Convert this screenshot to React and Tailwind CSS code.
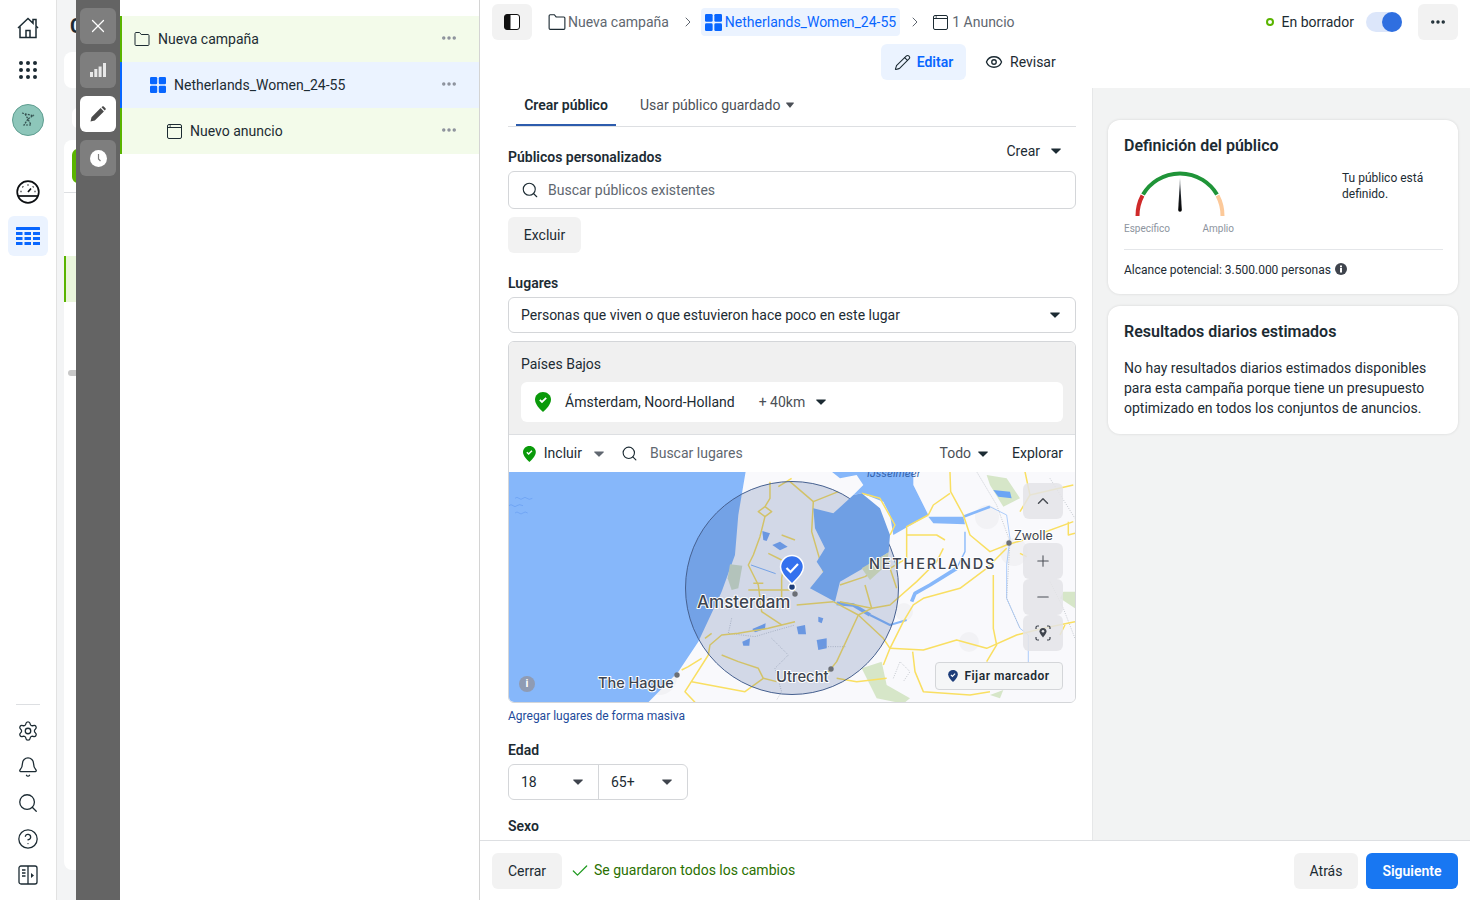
import React from 'react';
import { X, Pencil, Eye, Search, Settings, Bell, CircleHelp, ChevronRight, ChevronUp, Plus, Minus, Check, Ellipsis } from 'lucide-react';

const Caret = ({ className = 'text-[#1c2b33]' }) => (
    <svg width="10" height="6" viewBox="0 0 10 6" className={className}>
        <path d="M0.6 0.5h8.8c.4 0 .6.4.4.7L5.4 5.5a.6.6 0 0 1-.8 0L.2 1.2C0 .9.2.5.6.5z" fill="currentColor" />
    </svg>
);

const FolderIcon = ({ size = 16 }) => (
    <svg width={size} height={size} viewBox="0 0 16 16" fill="none" stroke="currentColor" strokeWidth="1">
        <path d="M1 2.500C1 1.900 1.400 1.500 2 1.500h3.600l1.600 2H14c.6 0 1 .4 1 1v9c0 .6-.4 1-1 1H2c-.6 0-1-.4-1-1z" />
    </svg>
);

const AdSetIcon = ({ size = 16 }) => (
    <svg width={size} height={size} viewBox="0 0 16 16" fill="#0866ff">
        <rect x="0" y="0" width="7.2" height="7.2" rx="1.2" />
        <rect x="8.8" y="0" width="7.2" height="7.2" rx="1.2" />
        <rect x="0" y="8.8" width="7.2" height="7.2" rx="1.2" />
        <rect x="8.8" y="8.8" width="7.2" height="7.2" rx="1.2" />
    </svg>
);

const AdIcon = ({ size = 15 }) => (
    <svg width={size} height={size} viewBox="0 0 15 15" fill="none" stroke="currentColor" strokeWidth="1">
        <rect x="0.5" y="0.5" width="14" height="14" rx="1.5" />
        <path d="M0.5 3.5h14" />
        <path d="M2.5 2h1.5" />
    </svg>
);

const GreenPin = ({ size = 20 }) => (
    <svg width={size * 0.8} height={size} viewBox="0 0 16 20">
        <path d="M8 0C3.6 0 0 3.3 0 7.6 0 12.4 4.700 17.300 8 20c3.300-2.700 8-7.600 8-12.400C16 3.300 12.400 0 8 0z" fill="#0a9a0a" />
        <path d="M4.800 7.800l2.200 2.200 4.200-4.200" fill="none" stroke="#fff" strokeWidth="1.800" />
    </svg>
);

const HomeIcon = () => (
    <svg width="22" height="22" viewBox="0 0 22 22" fill="none" stroke="#1c2b33" strokeWidth="1.500">
        <path d="M1 11L11 1.500l5 4.700V2.500h3v6.500l2 2" />
        <path d="M3 9.500V20.500h16V9.500" />
        <path d="M9 20.500v-7h4v7" />
    </svg>
);

const DotsGrid = () => (
    <svg width="18" height="18" viewBox="0 0 18 18" fill="#1c2b33">
        {[2, 9, 16].map(y => [2, 9, 16].map(x => <circle key={`${x}-${y}`} cx={x} cy={y} r="2" />))}
    </svg>
);

const Avatar = () => (
    <svg width="32" height="32" viewBox="0 0 32 32">
        <circle cx="16" cy="16" r="15.500" fill="#8dc6ba" stroke="#5f9d90" strokeWidth="1" />
        <path d="M10 9l12 3M13 10l3 5-4 6h7l-3-6 6-4" fill="none" stroke="#33504f" strokeWidth="1.200" strokeDasharray="2 1" />
    </svg>
);

const GaugeIcon = () => (
    <svg width="24" height="24" viewBox="0 0 24 24" fill="none" stroke="#0c0f12" strokeWidth="1.700">
        <circle cx="12" cy="12" r="10.800" />
        <path d="M2 16h20" />
        <path d="M12 12l3-3.500" />
        <path d="M12 4.500v1M6.500 6.500l.7.700M4.500 11.500h1M18.500 11.500h1M17.500 6.500l-.7.700" strokeWidth="1.500" />
    </svg>
);

const TableIcon = () => (
    <svg width="24" height="20" viewBox="0 0 24 20" fill="#0866ff">
        <rect x="0" y="1" width="24" height="3" rx="0.500" />
        {[6, 11, 16].map(y => (
            <g key={y}>
                <rect x="0" y={y} width="6.500" height="3" />
                <rect x="8.500" y={y} width="6.500" height="3" />
                <rect x="17" y={y} width="7" height="3" />
            </g>
        ))}
    </svg>
);

const PanelIcon = () => (
    <svg width="20" height="20" viewBox="0 0 20 20" fill="none" stroke="#1c2b33" strokeWidth="1.300">
        <rect x="1" y="1" width="18" height="18" rx="2" />
        <path d="M10 1v18" />
        <path d="M4 5h3.500M4 8h3.500M4 11h3.500" />
        <path d="M13 8l3 2.500-3 2.500z" fill="#1c2b33" stroke="none" />
    </svg>
);

const NavRail = () => (
    <aside className="w-[57px] shrink-0 h-full bg-white border-r border-[#e2e2e2] flex flex-col items-center">
        <div className="h-[56px] flex items-center justify-center"><HomeIcon /></div>
        <div className="h-[28px] flex items-center justify-center"><DotsGrid /></div>
        <div className="mt-[20px] h-[32px]"><Avatar /></div>
        <div className="mt-[44px] h-[24px]"><GaugeIcon /></div>
        <div className="mt-[12px] w-[40px] h-[40px] rounded-md bg-[#ebf3ff] flex items-center justify-center"><TableIcon /></div>
        <div className="mt-auto w-[24px] border-t border-[#dddfe2] mb-[8px]" />
        <div className="flex flex-col items-center text-[#1c2b33] mb-[7px]">
            {[Settings, Bell, Search, CircleHelp].map((Icon, i) => (
                <div key={i} className="h-[36px] flex items-center justify-center"><Icon size={22} strokeWidth={1.400} /></div>
            ))}
            <div className="h-[36px] flex items-center justify-center"><PanelIcon /></div>
        </div>
    </aside>
);

// the page behind the drawer, only a sliver shows
const PeekStrip = () => (
    <div className="w-[19px] shrink-0 h-full bg-[#f3f4f5] pl-[7px] overflow-hidden flex flex-col">
        <div className="h-[52px] pt-[12px] pl-[6px] text-[20px] leading-[28px] font-bold text-[#1c2b33]">C</div>
        <div className="h-[36px] w-[40px] bg-white rounded-l-lg" />
        <div className="mt-[20px] h-[20px] ml-[8px] w-[20px] bg-white rounded-l-md" />
        <div className="mt-[12px] flex-1 bg-white rounded-l-lg mb-[30px] w-[40px] flex flex-col">
            <div className="mt-[9px] ml-[8px] h-[34px] w-[6px] bg-[#5ab400] rounded-l-md" />
            <div className="mt-[9px] border-t border-[#dddfe2]" />
            <div className="mt-[63px] h-[46px] bg-[#eaf6dc] border-l-2 border-[#5ab400]" />
            <div className="mt-[68px] h-[6px] ml-[4px] bg-[#c8c8c8] rounded-l-full" />
        </div>
    </div>
);

const ToolButton = ({ active, children }) => (
    <div className={`w-[36px] h-[36px] rounded-md flex items-center justify-center ${active ? 'bg-white text-[#4b4b4b]' : 'bg-[#7e7e7e] text-white'}`}>
        {children}
    </div>
);

const ToolStrip = () => (
    <div className="w-[44px] shrink-0 h-full bg-[#646464] pt-[8px] flex flex-col items-center gap-[8px]">
        <ToolButton><X size={22} strokeWidth={1.300} /></ToolButton>
        <ToolButton>
            <svg width="16" height="14" viewBox="0 0 16 14" fill="#e8e8e8">
                <rect x="0" y="9" width="3" height="5" />
                <rect x="4.300" y="6" width="3" height="8" />
                <rect x="8.600" y="3.500" width="3" height="10.500" />
                <rect x="13" y="0" width="3" height="14" />
            </svg>
        </ToolButton>
        <ToolButton active>
            <svg width="16" height="16" viewBox="0 0 16 16" fill="currentColor">
                <path d="M0.500 15.500l1-4.300L10.600 2.100l3.300 3.300L4.800 14.500zM11.500 1.200l.8-.7c.4-.4 1-.4 1.400 0l1.800 1.800c.4.4.4 1 0 1.400l-.8.800z" />
            </svg>
        </ToolButton>
        <ToolButton>
            <svg width="17" height="17" viewBox="0 0 17 17">
                <circle cx="8.500" cy="8.500" r="8.500" fill="#fff" />
                <path d="M8.500 4v5l2 2" fill="none" stroke="#7e7e7e" strokeWidth="1.200" />
            </svg>
        </ToolButton>
    </div>
);

const TREE_ROWS = [
    { label: 'Nueva campaña', icon: <FolderIcon />, indent: 'pl-[12px]', tone: 'bg-[#f3fbea] border-[#5ab400]' },
    { label: 'Netherlands_Women_24-55', icon: <AdSetIcon />, indent: 'pl-[28px]', tone: 'bg-[#ebf3ff] border-[#0866ff]' },
    { label: 'Nuevo anuncio', icon: <AdIcon />, indent: 'pl-[45px]', tone: 'bg-[#f3fbea] border-[#5ab400]' },
];

const TreePanel = () => (
    <div className="w-[360px] shrink-0 h-full bg-white border-r border-[#d4d4d4] pt-[16px]">
        {TREE_ROWS.map(row => (
            <div key={row.label} className={`h-[46px] border-l-2 pr-[21px] flex items-center gap-[8px] text-[14px] text-[#1c2b33] ${row.tone} ${row.indent}`}>
                {row.icon}
                <span className="flex-1">{row.label}</span>
                <Ellipsis size={18} strokeWidth={2.600} className="text-[#8a8f9a] -mt-[2px]" />
            </div>
        ))}
    </div>
);

const TopBar = () => (
    <header className="h-[88px] shrink-0 bg-white px-[12px] pt-[4px]">
        <div className="h-[36px] flex items-center text-[14px] text-[#606770]">
            <div className="w-[40px] h-[36px] rounded-md bg-[#f2f2f2] flex items-center justify-center">
                <svg width="16" height="16" viewBox="0 0 16 16">
                    <rect x="0.500" y="0.500" width="15" height="15" rx="2.500" fill="#fff" stroke="#111" />
                    <path d="M3 0.500h3.500v15H3a2.500 2.500 0 0 1-2.500-2.500V3A2.500 2.500 0 0 1 3 .5z" fill="#111" />
                </svg>
            </div>
            <span className="ml-[16px] text-[#1c2b33]"><FolderIcon size={18} /></span>
            <span className="ml-[2px]">Nueva campaña</span>
            <ChevronRight size={16} strokeWidth={1.500} className="ml-[11px]" />
            <div className="ml-[5px] h-[28px] px-[4px] rounded bg-[#ebf3ff] flex items-center gap-[3px] text-[#0866ff]">
                <AdSetIcon size={17} />
                <span>Netherlands_Women_24-55</span>
            </div>
            <ChevronRight size={16} strokeWidth={1.500} className="ml-[7px]" />
            <span className="ml-[10px] text-[#1c2b33]"><AdIcon /></span>
            <span className="ml-[4px]">1 Anuncio</span>
            <span className="ml-auto w-[8px] h-[8px] rounded-full border-2 border-[#5ab400] mr-[8px]" />
            <span className="text-[#1c2b33] mr-[12px]">En borrador</span>
            <div className="w-[36px] h-[20px] rounded-full bg-[#dce6fa] flex justify-end mr-[16px]">
                <div className="w-[20px] h-[20px] rounded-full bg-[#2f6fe0]" />
            </div>
            <div className="w-[40px] h-[36px] rounded-md bg-[#f2f2f2] flex items-center justify-center text-[#1c2b33]">
                <Ellipsis size={18} strokeWidth={2.600} />
            </div>
        </div>
        <div className="mt-[4px] h-[36px] flex items-center pl-[389px] text-[14px]">
            <div className="h-[36px] w-[85px] rounded-md bg-[#ebf3ff] flex items-center justify-center gap-[6px] text-[#0866ff] font-semibold">
                <Pencil size={17} strokeWidth={1.500} className="text-[#1c2b33]" />
                <span>Editar</span>
            </div>
            <Eye size={18} strokeWidth={1.800} className="ml-[19px] text-[#1c2b33]" />
            <span className="ml-[7px] text-[#1c2b33]">Revisar</span>
        </div>
    </header>
);

const SectionLabel = ({ children, className = '' }) => (
    <div className={`text-[14px] leading-[20px] font-semibold text-[#1c2b33] ${className}`}>{children}</div>
);

const ROADS_LEFT = [
    'M795,50 L795,100 L780,125 L760,140 L780,155 L765,215 L745,270 L730,300 L760,360 L770,440 L830,480',
    'M780,125 L800,140 L780,155',
    'M790,265 L830,285',
    'M730,375 L870,375',
    'M745,355 L775,355',
    'M830,210 L870,225',
    'M840,280 L830,340 L830,400',
    'M870,470 L790,490 L700,505 L650,510 L615,540 L610,570 L540,680 L570,712',
    'M650,570 L700,590 L760,610 L775,640 L720,680 L560,650',
    'M775,640 L815,650',
    'M600,520 L620,505',
    'M530,615 L550,605 L590,580',
    'M820,65 L860,40',
];

const ROADS_RIGHT = [
    'M480,20 L482,80 L520,150 L540,210 L600,260 L650,240 L700,225 L850,170',
    'M415,150 L350,185 L350,280 L300,310 L320,370',
    'M480,85 L430,120 L415,150',
    'M350,210 L440,210 L465,225',
    'M650,250 L590,310 L510,370 L400,400 L370,420 L340,470 L300,550 L280,600',
    'M300,550 L400,555 L500,525 L590,550 L680,510 L760,490 L855,470',
    'M610,330 L610,490 L620,540 L590,590',
    'M460,250 L440,290 L380,350 L300,420 L245,430 L150,410',
    'M368,560 L375,620 L400,680 L540,690 L600,680',
    'M705,20 L720,90 L690,140',
    'M720,90 L850,60',
    'M835,170 L835,210 L855,205',
    'M0,50 L70,110 L145,80',
    'M70,110 L65,200 L100,320',
    'M130,410 L205,450 L140,590 L100,640',
    'M205,450 L280,520 L300,550',
    'M225,360 L245,430 L205,450',
    'M150,360 L225,335 L300,290',
    'M20,420 L130,410',
    'M215,85 L270,100 L315,180 L300,210',
    'M810,510 L825,480',
    'M690,265 L710,275',
    'M140,640 L200,650 L290,640',
];

const MapDrawing = () => (
    <svg viewBox="0 0 567 230" width="567" height="230" className="block">
        <rect width="567" height="230" fill="#f9f9fc" />
        {/* soft urban patches */}
        <g fill="#f2f2f5">
            <circle cx="478" cy="45" r="12" /><circle cx="460" cy="170" r="10" /><circle cx="350" cy="50" r="18" />
            <circle cx="395" cy="140" r="9" /><circle cx="505" cy="80" r="14" /><circle cx="150" cy="205" r="18" />
        </g>
        <g transform="translate(281,-7) scale(0.3333)">
            <g fill="#d6e6c8">
                <path d="M590,30 L650,40 L690,100 L640,125 L600,60z" />
                <path d="M820,380 L855,380 L855,430 L810,400z" />
                <path d="M215,610 L275,590 L290,660 L360,700 L340,716 L260,700z" />
                <path d="M600,690 L640,675 L630,700z" />
            </g>
            <path d="M125,20 L370,20 L370,60 L415,150 L310,210 L300,150 L280,110 L215,85 L190,90 L220,60 L200,30 L150,40z" fill="#86b7fa" />
            <path d="M415,155 L520,155 L525,178 L430,175z" fill="#86b7fa" />
            <path d="M610,75 L660,80 L665,100 L625,95z" fill="#6ba5f5" />
            <g fill="none" stroke="#86b7fa" strokeLinejoin="round">
                <path d="M520,155 L600,125" strokeWidth="8" />
                <path d="M525,200 L525,260 L500,310" strokeWidth="4" />
                <path d="M500,310 L420,360 L375,385 L365,410" strokeWidth="11" />
                <path d="M140,415 L190,420 L240,450" strokeWidth="11" />
                <path d="M240,450 L300,480 L350,465" strokeWidth="6" />
                <path d="M600,125 L650,150 L660,220 L650,300 L650,400 L690,490 L715,510 L715,600" strokeWidth="2" />
            </g>
            <g fill="#7aaaf5">
                <path d="M85,455 L100,460 L95,475 L85,470z" />
                <path d="M20,485 L45,480 L48,508 L25,508z" />
                <path d="M80,525 L110,520 L110,550 L85,555z" />
            </g>
            <g fill="none" stroke="#aab0b8" strokeWidth="2" strokeDasharray="3 4">
                <path d="M560,20 L620,120 L660,230 L650,400 L690,490" />
                <path d="M310,640 L330,590 L360,620 L340,650" />
                <path d="M780,350 L820,430 L855,520" />
                <path d="M100,545 L170,545" />
                <path d="M780,40 L855,160" />
            </g>
            <g fill="none" stroke="#f9df62" strokeWidth="4.500" strokeLinejoin="round">
                {ROADS_RIGHT.map((d, i) => <path key={i} d={d} />)}
            </g>
        </g>
        <g transform="translate(-4,-7) scale(0.3333)">
            <path d="M10,20 L722,20 L700,150 L690,270 L650,380 L580,530 L520,620 L430,712 L10,712z" fill="#86b7fa" />
            <path d="M675,298 L712,302 L700,370 L680,375 L668,340z" fill="#d3e0c6" />
            <g fill="#7aaaf5">
                <path d="M772,198 L795,205 L785,228 L775,225z" />
                <path d="M802,240 L825,230 L848,245 L825,256z" />
                <path d="M742,492 L782,475 L780,492 L750,502z" />
                <path d="M712,530 L735,520 L733,542 L715,542z" />
            </g>
            <path d="M738,300 L812,326" fill="none" stroke="#86b7fa" strokeWidth="3" />
            <g fill="none" stroke="#aab0b8" strokeWidth="2" strokeDasharray="3 4">
                <path d="M680,460 L670,505 L750,515 L800,500 L870,480" />
                <path d="M800,520 L850,570 L810,610 L830,680 L815,705" />
            </g>
            <g fill="none" stroke="#f9df62" strokeWidth="4.500" strokeLinejoin="round">
                {ROADS_LEFT.map((d, i) => <path key={i} d={d} />)}
            </g>
            <g fill="none" stroke="#5b93ee" strokeWidth="1.500">
                <path d="M30,100 q6,-6 12,0 t12,0 t12,0 t16,0" />
                <path d="M12,122 q6,-6 12,0 t12,0 t18,0" />
                <path d="M30,144 q6,-6 12,0 t12,0 t14,0" />
            </g>
        </g>
        {/* radius around the pin */}
        <circle cx="283" cy="116" r="106.500" fill="#22408a" fillOpacity="0.18" stroke="#46608f" strokeWidth="1" />
        <g transform="translate(281,-7) scale(0.3333)">
            <path d="M70,130 L130,145 L190,90 L215,85 L270,130 L300,210 L296,262 L220,310 L150,350 L135,410 L60,370 L100,320 L80,290 L105,250 L75,190z" fill="#6f9fe4" />
            <path d="M215,310 L296,262 L290,300 L240,345z" fill="#c0ccb4" />
        </g>
        <g fill="#6b6f76">
            <circle cx="168" cy="203" r="2.700" /><circle cx="322" cy="197" r="2.700" /><circle cx="500" cy="71" r="2.700" /><circle cx="286" cy="122" r="2.700" />
        </g>
        <g className="font-[family-name:Inter,sans-serif]" fill="#3d4450" stroke="#ffffff" strokeWidth="2" paintOrder="stroke" strokeLinejoin="round">
            <text x="188" y="136" fontSize="17" fontWeight="500">Amsterdam</text>
            <text x="89" y="216" fontSize="14.500" fontWeight="500">The Hague</text>
            <text x="267" y="210" fontSize="14.800" fontWeight="500">Utrecht</text>
            <text x="505" y="68" fontSize="12.500">Zwolle</text>
            <text x="360" y="97" fontSize="14.500" fontWeight="500" letterSpacing="1.800">NETHERLANDS</text>
        </g>
        <text x="358" y="5" fontSize="10.500" fontStyle="italic" fill="#2f5da8" className="font-[family-name:Inter,sans-serif]">IJsselmeer</text>
        {/* selected location pin */}
        <circle cx="283" cy="115" r="3.500" fill="#1d3d7a" stroke="#fff" strokeWidth="1.500" />
        <path d="M283,112 C275,104 271.500,100 271.500,95 A11.500,11.500 0 0 1 294.500,95 C294.500,100 291,104 283,112z" fill="#3471ee" stroke="#fff" strokeWidth="1.500" />
        <path d="M277.500,96 L281.500,100 L289,92" fill="none" stroke="#fff" strokeWidth="2.200" />
    </svg>
);

const MapButton = ({ children, className = '' }) => (
    <div className={`w-[40px] h-[36px] rounded-md bg-[#e4e4e8]/85 flex items-center justify-center text-[#4b4f56] ${className}`}>{children}</div>
);

const LocationBox = () => (
    <div className="mt-[8px] border border-[#d4d6d9] rounded-md overflow-hidden">
        <div className="h-[93px] bg-[#f0f0f0] px-[12px] pt-[12px] border-b border-[#dddfe2]">
            <div className="text-[14px] leading-[20px] text-[#1c2b33]">Países Bajos</div>
            <div className="mt-[8px] h-[40px] bg-white rounded-md flex items-center pl-[14px] text-[14px] text-[#1c2b33]">
                <GreenPin />
                <span className="ml-[14px]">Ámsterdam, Noord-Holland</span>
                <span className="ml-[24px] text-[#4b4f56]">+ 40km</span>
                <span className="ml-[11px]"><Caret /></span>
            </div>
        </div>
        <div className="h-[37px] bg-white flex items-center pl-[14px] pr-[12px] text-[14px] text-[#1c2b33]">
            <GreenPin size={16} />
            <span className="ml-[8px]">Incluir</span>
            <span className="ml-[12px]"><Caret className="text-[#606770]" /></span>
            <Search size={17} strokeWidth={1.600} className="ml-[17px]" />
            <span className="ml-[12px] text-[#606770]">Buscar lugares</span>
            <span className="ml-auto text-[#4b4f56]">Todo</span>
            <span className="ml-[7px]"><Caret /></span>
            <span className="ml-[24px]">Explorar</span>
        </div>
        <div className="relative h-[230px] overflow-hidden">
            <MapDrawing />
            <div className="absolute left-[10px] bottom-[10px] w-[16px] h-[16px] rounded-full bg-[#8f9bb3] text-white text-[11px] leading-[16px] text-center font-bold">i</div>
            <div className="absolute right-[12px] top-[11px] flex flex-col">
                <MapButton className="mb-[24px]"><ChevronUp size={18} strokeWidth={2} /></MapButton>
                <MapButton><Plus size={18} strokeWidth={1.400} /></MapButton>
                <MapButton><Minus size={18} strokeWidth={1.400} /></MapButton>
                <MapButton>
                    <svg width="16" height="16" viewBox="0 0 16 16" fill="none" stroke="#3f444d" strokeWidth="1.200">
                        <path d="M1 4V2.500C1 1.700 1.700 1 2.500 1H4M12 1h1.500c.8 0 1.500.7 1.500 1.500V4M15 12v1.500c0 .8-.7 1.500-1.500 1.500H12M4 15H2.500C1.700 15 1 14.300 1 13.500V12" />
                        <path d="M8 3C5.800 3 4.500 4.600 4.500 6.300 4.500 8.700 8 12.500 8 12.500s3.500-3.800 3.500-6.200C11.500 4.600 10.200 3 8 3z" fill="#3f444d" stroke="none" />
                        <circle cx="8" cy="6.200" r="1.300" fill="#e4e4e8" stroke="none" />
                    </svg>
                </MapButton>
            </div>
            <div className="absolute right-[12px] bottom-[12px] w-[128px] h-[28px] bg-[#f5f6f7] border border-[#d4d6d9] rounded-sm flex items-center justify-center gap-[6px] text-[12px] font-semibold text-[#1c2b33] tracking-[0.5px]">
                <svg width="10" height="12" viewBox="0 0 16 20">
                    <path d="M8 0C3.600 0 0 3 0 7.200 0 12 4.700 17.300 8 20c3.300-2.700 8-8 8-12.800C16 3 12.400 0 8 0z" fill="#1d3d7a" />
                    <path d="M4.500 8l2.500 2.500 4.500-4.500" fill="none" stroke="#fff" strokeWidth="2" />
                </svg>
                Fijar marcador
            </div>
        </div>
    </div>
);

const AudienceForm = () => (
    <div className="flex-1 min-w-0 bg-white pl-[28px] pr-[16px] overflow-hidden">
        <div className="h-[39px] border-b border-[#dddfe2] flex items-end pl-[8px] text-[14px]">
            <div className="w-[100px] h-[38px] border-b-2 border-[#2d5cad] text-center leading-[34px] font-semibold text-[#1c2b33]">Crear público</div>
            <div className="ml-[24px] h-[38px] leading-[34px] text-[#4b4f56] flex items-start gap-[5px]">
                Usar público guardado
                <span className="mt-[14px] flex scale-x-80"><Caret className="text-[#4b4f56]" /></span>
            </div>
        </div>
        <div className="mt-[12px] h-[30px] flex justify-between items-start">
            <SectionLabel className="mt-[8px]">Públicos personalizados</SectionLabel>
            <div className="mt-[2px] flex items-center pr-[15px] text-[14px] leading-[20px] text-[#1c2b33]">
                Crear
                <span className="ml-[11px] flex"><Caret /></span>
            </div>
        </div>
        <div className="mt-[2px] h-[38px] border border-[#d4d6d9] rounded-md flex items-center pl-[12px] text-[14px] text-[#606770]">
            <Search size={18} strokeWidth={1.500} className="text-[#1c2b33]" />
            <span className="ml-[9px]">Buscar públicos existentes</span>
        </div>
        <div className="mt-[8px] w-[73px] h-[36px] rounded-md bg-[#f2f2f2] flex items-center justify-center text-[14px] text-[#1c2b33]">Excluir</div>
        <SectionLabel className="mt-[20px]">Lugares</SectionLabel>
        <div className="mt-[4px] h-[36px] border border-[#d4d6d9] rounded-md flex items-center pl-[12px] pr-[15px] text-[14px] text-[#1c2b33]">
            <span className="flex-1">Personas que viven o que estuvieron hace poco en este lugar</span>
            <Caret />
        </div>
        <LocationBox />
        <div className="mt-[5px] text-[12px] leading-[16px] text-[#1d4a9a]">Agregar lugares de forma masiva</div>
        <SectionLabel className="mt-[16px]">Edad</SectionLabel>
        <div className="mt-[4px] w-[180px] h-[36px] border border-[#d4d6d9] rounded-md flex text-[14px] text-[#1c2b33]">
            <div className="w-[90px] border-r border-[#d4d6d9] flex items-center justify-between pl-[12px] pr-[15px]">18<Caret className="text-[#3f444d]" /></div>
            <div className="flex-1 flex items-center justify-between pl-[12px] pr-[15px]">65+<Caret className="text-[#3f444d]" /></div>
        </div>
        <SectionLabel className="mt-[16px]">Sexo</SectionLabel>
    </div>
);

const Card = ({ title, children }) => (
    <section className="bg-white rounded-xl shadow-[0_0_3px_rgba(0,0,0,0.12)] px-[16px] pt-[15px]">
        <h2 className="text-[16px] leading-[22px] font-semibold text-[#1c2b33]">{title}</h2>
        {children}
    </section>
);

const Gauge = () => (
    <svg width="110" height="64" viewBox="0 0 110 64" className="block">
        <defs>
            <linearGradient id="needle" x1="0" y1="0" x2="0" y2="1">
                <stop offset="0" stopColor="#8a9096" />
                <stop offset="0.5" stopColor="#20242a" />
                <stop offset="1" stopColor="#000" />
            </linearGradient>
        </defs>
        <g fill="none" strokeWidth="4">
            <path d="M13.500,60 A43,43 0 0 1 18.500,39.500" stroke="#cf2a2a" />
            <path d="M19,38.500 A43,43 0 0 1 93,38.500" stroke="#1f9438" />
            <path d="M93.500,39.500 A43,43 0 0 1 98.500,60" stroke="#fcc99a" />
        </g>
        <path d="M56,22 L57.800,54 a1.800,1.800 0 0 1 -3.600,0z" fill="url(#needle)" />
    </svg>
);

const InsightsPanel = () => (
    <div className="w-[378px] shrink-0 bg-[#f2f3f3] border-l border-[#e6e7e8] pl-[15px] pr-[12px] pt-[32px] flex flex-col gap-[12px]">
        <Card title="Definición del público">
            <div className="flex h-[80px]">
                <div className="w-[218px]">
                    <div className="-mt-[1px]"><Gauge /></div>
                    <div className="mt-[3px] w-[110px] flex justify-between text-[10px] leading-[12px] text-[#8d949e]">
                        <span>Específico</span><span>Amplio</span>
                    </div>
                </div>
                <p className="mt-[13px] text-[12px] leading-[16px] text-[#1c2b33] w-[100px]">Tu público está definido.</p>
            </div>
            <div className="mt-[12px] border-t border-[#e4e6e9] mr-[-1px]" />
            <div className="mt-[12px] mb-[16px] flex items-center gap-[4px] text-[12px] leading-[16px] text-[#1c2b33]">
                Alcance potencial: 3.500.000 personas
                <svg width="12" height="12" viewBox="0 0 12 12" className="-mt-[2px]">
                    <circle cx="6" cy="6" r="6" fill="#3f444d" />
                    <rect x="5" y="5" width="2" height="4.500" fill="#fff" />
                    <rect x="5" y="2.500" width="2" height="1.800" fill="#fff" />
                </svg>
            </div>
        </Card>
        <Card title="Resultados diarios estimados">
            <p className="mt-[15px] mb-[16px] text-[14px] leading-[20px] text-[#1c2b33]">
                No hay resultados diarios estimados disponibles para esta campaña porque tiene un presupuesto optimizado en todos los conjuntos de anuncios.
            </p>
        </Card>
    </div>
);

const Footer = () => (
    <footer className="h-[60px] shrink-0 bg-white border-t border-[#dddfe2] px-[12px] flex items-center text-[14px]">
        <div className="w-[70px] h-[36px] pt-px rounded-md bg-[#f2f2f2] flex items-center justify-center text-[#1c2b33]">Cerrar</div>
        <Check size={20} strokeWidth={1.500} className="ml-[8px] text-[#1f9a1f]" />
        <span className="ml-[4px] text-[#2a7000]">Se guardaron todos los cambios</span>
        <div className="ml-auto w-[64px] h-[36px] pt-px rounded-md bg-[#f2f2f2] flex items-center justify-center text-[#1c2b33]">Atrás</div>
        <div className="ml-[8px] w-[92px] h-[36px] pt-px rounded-md bg-[#1877f2] flex items-center justify-center text-white font-semibold">Siguiente</div>
    </footer>
);

const App = () => {
    return (
        <div className="w-[1470px] h-[900px] overflow-hidden flex bg-white font-[family-name:Roboto,sans-serif] antialiased">
            <NavRail />
            <PeekStrip />
            <ToolStrip />
            <TreePanel />
            <main className="flex-1 min-w-0 h-full flex flex-col">
                <TopBar />
                <div className="flex-1 min-h-0 flex">
                    <AudienceForm />
                    <InsightsPanel />
                </div>
                <Footer />
            </main>
        </div>
    );
};

export default App;
